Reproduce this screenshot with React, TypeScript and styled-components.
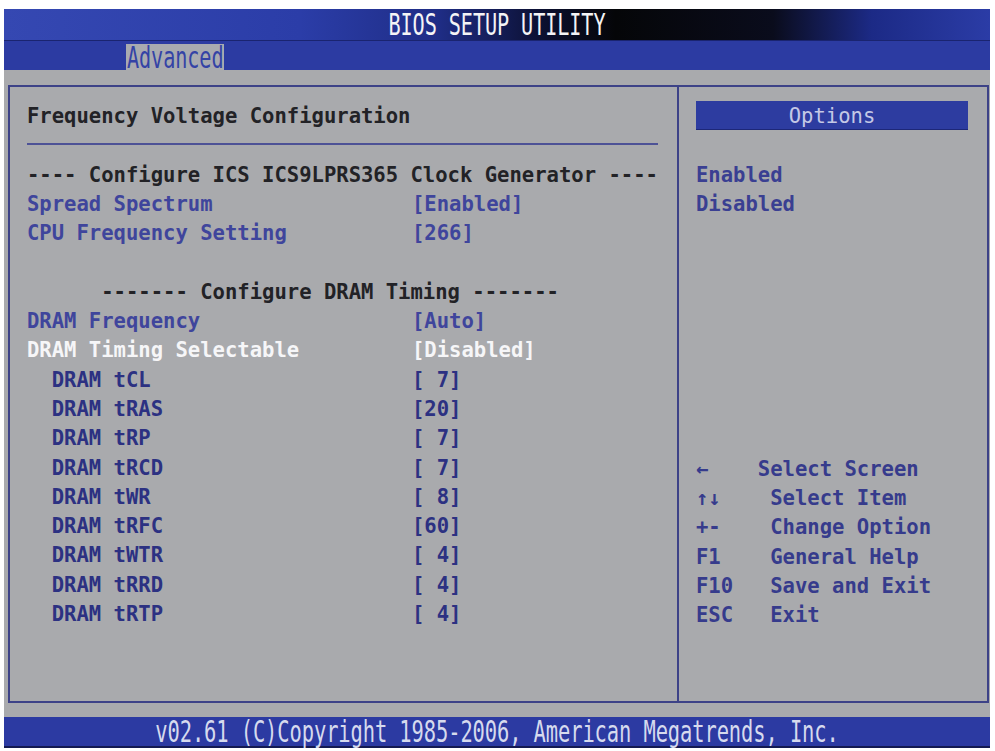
import React from 'react';
import styled, { createGlobalStyle } from 'styled-components';

const GlobalStyle = createGlobalStyle`
    html, body {
        margin: 0;
        padding: 0;
        background: #ffffff;
    }
`;

const ROW = 29.3;
const MONO = `"DejaVu Sans Mono", "Liberation Mono", monospace`;

const Screen = styled.div`
    display: flex;
    flex-direction: column;
    margin: 9px 5px 0 4px;
    height: 739px;
    font-family: ${MONO};
`;

const TitleBar = styled.header`
    height: 31px;
    display: flex;
    align-items: center;
    justify-content: center;
    background: linear-gradient(90deg, #3548b2 0%, #2b3da8 30%, #1f2d86 44%, #0b0f2e 55%, #050608 62%, #0a0c1c 78%, #1c2a86 88%, #2b3ca6 100%);
`;

const TallText = styled.span<{ $color: string; $size?: number }>`
    display: inline-block;
    font-size: ${(p) => p.$size || 20.2}px;
    color: ${(p) => p.$color};
    transform: scaleY(1.45);
    white-space: pre;
    letter-spacing: -0.1px;
`;

const MenuBar = styled.nav`
    height: 29px;
    display: flex;
    align-items: stretch;
    padding-left: 122px;
    background: #2c3ba2;
    border-top: 1px solid #1a2470;
`;

const Tab = styled.div<{ $active?: boolean }>`
    display: flex;
    align-items: center;
    padding: 2px 1px 0;
    margin-top: 3px;
    background: ${(p) => (p.$active ? '#a9abb0' : 'transparent')};
`;

const Body = styled.main`
    flex: 1;
    background: #a9aaad;
    padding: 15px 2px 14px 4px;
    display: flex;
`;

const Frame = styled.div`
    flex: 1;
    display: grid;
    grid-template-columns: 669px 1fr;
    border: 2px solid #3d4287;
`;

const Panel = styled.section<{ $divider?: boolean }>`
    padding: 15px 19px 0 17px;
    border-right: ${(p) => (p.$divider ? '2px solid #3d4287' : 'none')};
    font-size: 20.55px;
    font-weight: bold;
`;

const Row = styled.div<{ $color?: string; $indent?: number }>`
    display: grid;
    grid-template-columns: 385px 1fr;
    height: ${ROW}px;
    line-height: ${ROW}px;
    white-space: pre;
    color: ${(p) => p.$color || '#3f459c'};
    & > span:first-child {
        padding-left: ${(p) => (p.$indent || 0) * 12.37}px;
    }
`;

const Line = styled.div<{ $color?: string }>`
    height: ${ROW}px;
    line-height: ${ROW}px;
    white-space: pre;
    color: ${(p) => p.$color || '#3f459c'};
`;

const Separator = styled.hr`
    border: 0;
    height: 2px;
    margin: 12px 0 15.3px;
    background: #4d5296;
`;

const OptionsHeader = styled.div`
    height: 29px;
    width: 272px;
    margin-top: -1px;
    display: flex;
    align-items: center;
    justify-content: center;
    background: #2d3ca0;
    color: #c4c8e6;
    font-weight: normal;
    box-shadow: inset 0 -1px 0 #1d2778;
`;

const Spacer = styled.div<{ $rows: number }>`
    height: ${(p) => p.$rows * ROW + 1.3}px;
`;

const Footer = styled.footer`
    height: 31px;
    display: flex;
    align-items: center;
    justify-content: center;
    background: #2c3aa2;
    border-bottom: 2px solid #141a52;
    box-sizing: border-box;
`;

type Item = {
    label: string,
    value: string,
    indent?: number,
    selected?: boolean,
    dark?: boolean,
};

const clockItems: Item[] = [
    { label: 'Spread Spectrum', value: '[Enabled]' },
    { label: 'CPU Frequency Setting', value: '[266]' },
];

const dramItems: Item[] = [
    { label: 'DRAM Frequency', value: '[Auto]' },
    { label: 'DRAM Timing Selectable', value: '[Disabled]', selected: true },
    { label: 'DRAM tCL', value: '[ 7]', indent: 2, dark: true },
    { label: 'DRAM tRAS', value: '[20]', indent: 2, dark: true },
    { label: 'DRAM tRP', value: '[ 7]', indent: 2, dark: true },
    { label: 'DRAM tRCD', value: '[ 7]', indent: 2, dark: true },
    { label: 'DRAM tWR', value: '[ 8]', indent: 2, dark: true },
    { label: 'DRAM tRFC', value: '[60]', indent: 2, dark: true },
    { label: 'DRAM tWTR', value: '[ 4]', indent: 2, dark: true },
    { label: 'DRAM tRRD', value: '[ 4]', indent: 2, dark: true },
    { label: 'DRAM tRTP', value: '[ 4]', indent: 2, dark: true },
];

const helpKeys = [
    '←    Select Screen',
    '↑↓    Select Item',
    '+-    Change Option',
    'F1    General Help',
    'F10   Save and Exit',
    'ESC   Exit',
];

const renderItem = (item: Item) => (
    <Row
        key={item.label}
        $indent={item.indent}
        $color={item.selected ? '#f6f6f8' : item.dark ? '#2c3182' : undefined}
    >
        <span>{item.label}</span>
        <span>{item.value}</span>
    </Row>
);

const App: React.FC = () => {
    return <>
        <GlobalStyle />
        <Screen>
            <TitleBar>
                <TallText $color="#f4f4f6">BIOS SETUP UTILITY</TallText>
            </TitleBar>
            <MenuBar>
                <Tab $active>
                    <TallText $color="#3443a6">Advanced</TallText>
                </Tab>
            </MenuBar>
            <Body>
                <Frame>
                    <Panel $divider>
                        <Line $color="#222226">Frequency Voltage Configuration</Line>
                        <Separator />
                        <Line $color="#222226">---- Configure ICS ICS9LPRS365 Clock Generator ----</Line>
                        {clockItems.map(renderItem)}
                        <Line />
                        <Line $color="#222226">{'      ------- Configure DRAM Timing -------'}</Line>
                        {dramItems.map(renderItem)}
                    </Panel>
                    <Panel>
                        <OptionsHeader>Options</OptionsHeader>
                        <Spacer $rows={1} />
                        <Line $color="#3a3f92">Enabled</Line>
                        <Line $color="#3a3f92">Disabled</Line>
                        <Spacer $rows={8} />
                        {helpKeys.map((k) => (
                            <Line key={k} $color="#363b8c">{k}</Line>
                        ))}
                    </Panel>
                </Frame>
            </Body>
            <Footer>
                <TallText $color="#d6daee" $size={20.45}>v02.61 (C)Copyright 1985-2006, American Megatrends, Inc.</TallText>
            </Footer>
        </Screen>
    </>;
};

export default App;
